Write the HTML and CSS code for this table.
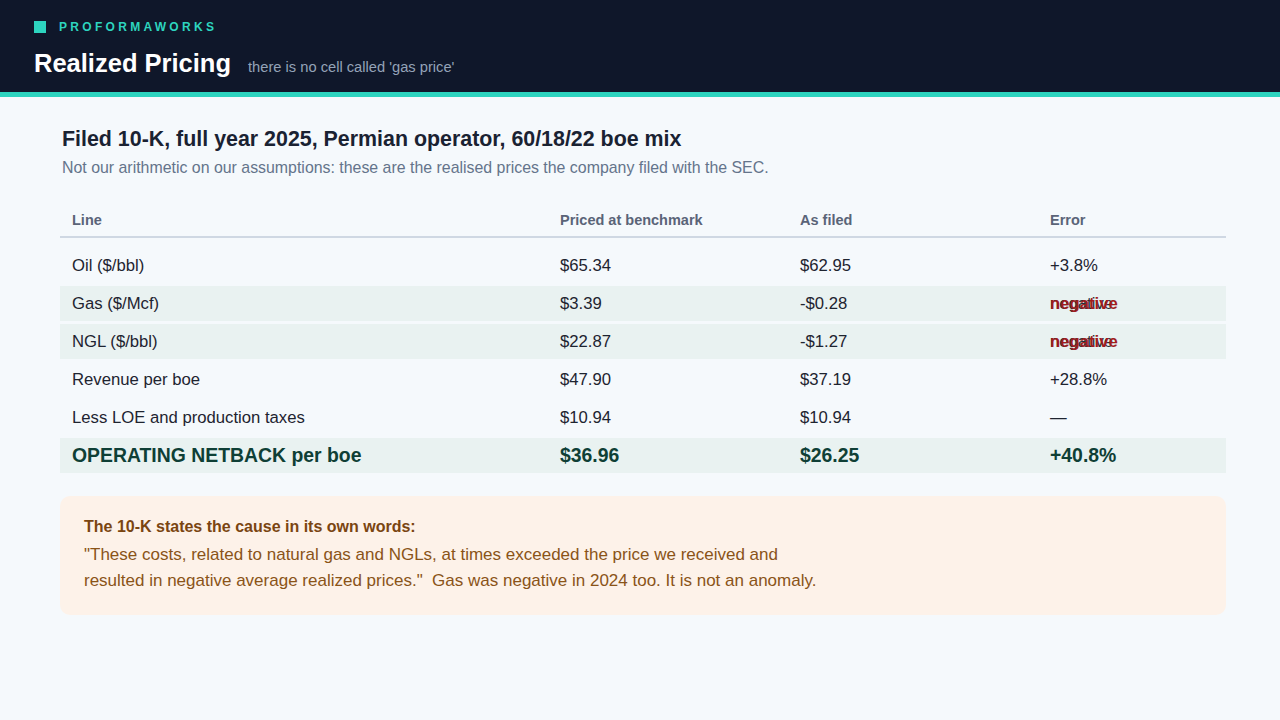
FILE: index.html
```html
<!DOCTYPE html>
<html lang="en">
<head>
<meta charset="utf-8">
<title>Realized Pricing</title>
<link rel="stylesheet" href="styles.css">
</head>
<body>
<header class="topbar">
  <div class="brand"><span class="brand-mark"></span><span class="brand-name">PROFORMAWORKS</span></div>
  <div class="title-row">
    <h1 class="title">Realized Pricing</h1>
    <span class="tagline">there is no cell called 'gas price'</span>
  </div>
</header>
<main class="content">
  <h2 class="heading">Filed 10-K, full year 2025, Permian operator, 60/18/22 boe mix</h2>
  <p class="sub">Not our arithmetic on our assumptions: these are the realised prices the company filed with the SEC.</p>

  <div class="table">
    <div class="thead row-grid">
      <div>Line</div><div>Priced at benchmark</div><div>As filed</div><div>Error</div>
    </div>
    <div class="row row-grid">
      <div>Oil ($/bbl)</div><div>$65.34</div><div>$62.95</div><div>+3.8%</div>
    </div>
    <div class="row row-grid alt">
      <div>Gas ($/Mcf)</div><div>$3.39</div><div>-$0.28</div><div><span class="neg">negative<span class="neg-over">negative</span></span></div>
    </div>
    <div class="row row-grid alt">
      <div>NGL ($/bbl)</div><div>$22.87</div><div>-$1.27</div><div><span class="neg">negative<span class="neg-over">negative</span></span></div>
    </div>
    <div class="row row-grid">
      <div>Revenue per boe</div><div>$47.90</div><div>$37.19</div><div>+28.8%</div>
    </div>
    <div class="row row-grid">
      <div>Less LOE and production taxes</div><div>$10.94</div><div>$10.94</div><div>—</div>
    </div>
    <div class="row row-grid alt total">
      <div>OPERATING NETBACK <span class="lc">per boe</span></div><div>$36.96</div><div>$26.25</div><div>+40.8%</div>
    </div>
  </div>

  <section class="callout">
    <div class="callout-title">The 10-K states the cause in its own words:</div>
    <p class="callout-text">"These costs, related to natural gas and NGLs, at times exceeded the price we received and resulted in negative average realized prices."&nbsp; Gas was negative in 2024 too. It is not an anomaly.</p>
  </section>
</main>
</body>
</html>
```

FILE: styles.css
```css
* { box-sizing: border-box; }
html, body { margin: 0; padding: 0; }
body {
  background: #f5f9fc;
  font-family: "Liberation Sans", Arial, sans-serif;
  color: #1e2430;
  width: 1280px;
  height: 720px;
  overflow: hidden;
}
.topbar {
  background: #0f172a;
  border-bottom: 5px solid #2dd4bf;
  height: 97px;
  padding: 19px 34px 0;
}
.brand {
  display: flex;
  align-items: center;
  gap: 13px;
  height: 16px;
}
.brand-mark {
  width: 12px;
  height: 12px;
  background: #2dd4bf;
}
.brand-name {
  color: #2dd4bf;
  font-size: 12px;
  font-weight: bold;
  letter-spacing: 3.3px;
}
.title-row {
  display: flex;
  align-items: baseline;
  gap: 17px;
  margin-top: 12px;
}
.title {
  margin: 0;
  color: #ffffff;
  font-size: 25.5px;
  font-weight: bold;
  line-height: 32px;
}
.tagline {
  color: #94a3b8;
  font-size: 14.7px;
}
.content {
  padding: 29px 54px 0 60px;
}
.heading {
  margin: 0 0 0 2px;
  font-size: 21.4px;
  font-weight: bold;
  color: #1a2232;
  line-height: 26px;
}
.sub {
  margin: 6px 0 0 2px;
  font-size: 15.9px;
  color: #64748b;
  line-height: 20px;
}
.table {
  margin-top: 33px;
}
.row-grid {
  display: grid;
  grid-template-columns: 488px 240px 250px 188px;
  align-items: center;
}
.row-grid > div {
  padding: 0 12px;
  white-space: nowrap;
}
.thead {
  line-height: 18px;
  padding-bottom: 7px;
  border-bottom: 2px solid #cfd8e3;
  font-size: 14.5px;
  font-weight: bold;
  color: #5a6478;
  margin-bottom: 10px;
}
.row {
  height: 35px;
  margin-bottom: 3px;
  font-size: 16.7px;
  color: #1e2430;
}
.alt {
  background: #e9f2f1;
}
.total {
  font-size: 19.4px;
  font-weight: bold;
  color: #0f3f36;
  margin-bottom: 0;
}
.neg {
  position: relative;
  display: inline-block;
  color: #263040;
}
.neg-over {
  position: absolute;
  left: 0;
  top: 0;
  color: #a11d1d;
  font-weight: bold;
}
.callout {
  margin-top: 23px;
  background: #fdf2e9;
  border-radius: 10px;
  padding: 21px 24px 21px;
}
.callout-title {
  font-size: 16px;
  font-weight: bold;
  color: #7a4511;
  line-height: 20px;
}
.callout-text {
  margin: 5px 0 0;
  max-width: 750px;
  font-size: 17px;
  line-height: 26px;
  color: #8a5418;
}
```
